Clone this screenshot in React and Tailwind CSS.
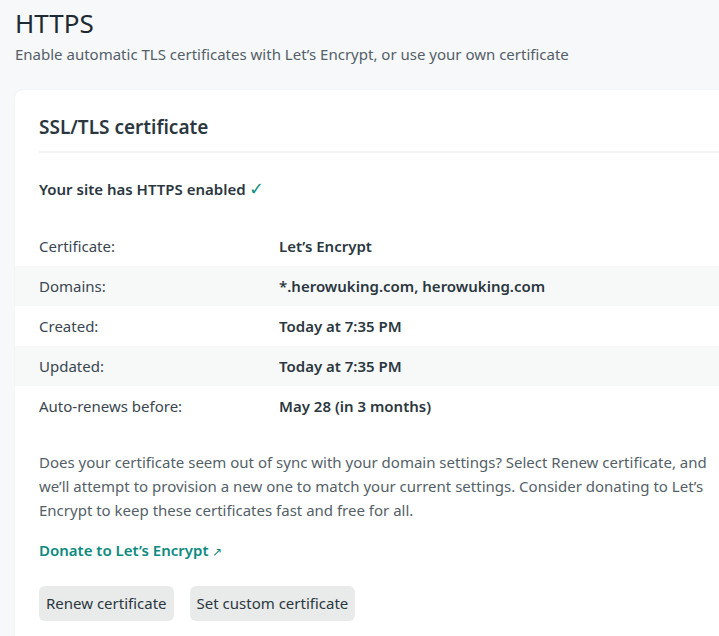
import React from 'react';

const rows = [
  { label: 'Certificate:', value: 'Let\u2019s Encrypt' },
  { label: 'Domains:', value: '*.herowuking.com, herowuking.com', striped: true },
  { label: 'Created:', value: 'Today at 7:35 PM' },
  { label: 'Updated:', value: 'Today at 7:35 PM', striped: true },
  { label: 'Auto-renews before:', value: 'May 28 (in 3 months)' },
];

export default function App() {
  return (
    <div
      className="min-h-screen bg-[#f6f8f9] text-[#2e3a44] overflow-hidden"
      style={{ fontFamily: '"Segoe UI", "Noto Sans", sans-serif' }}
    >
      <div className="pl-[15px] pt-[6px]">
        <h1 className="text-[26px] leading-[34px] font-normal text-[#1e2a33]">HTTPS</h1>
        <p className="mt-[3px] text-[15px] leading-[22px] text-[#545f68]">
          Enable automatic TLS certificates with Let’s Encrypt, or use your own certificate
        </p>

        <div className="mt-[25px] w-[740px] bg-white rounded-l-lg shadow-[0_0_2px_rgba(0,0,0,0.06)] pb-6">
          <div className="ml-6 border-b-2 border-[#f2f4f5] pt-[24px] pb-[11px]">
            <h2 className="text-[19px] leading-[26px] font-semibold text-[#2b3740]">SSL/TLS certificate</h2>
          </div>

          <p className="px-6 mt-[24px] text-[15px] leading-[24px] font-semibold text-[#2b3740]">
            Your site has HTTPS enabled <span className="text-[#14907f] font-normal text-[18px] leading-none">✓</span>
          </p>

          <div className="mt-[25px]">
            {rows.map((r) => (
              <div
                key={r.label}
                className={`flex items-center h-10 px-6 text-[15px] ${r.striped ? 'bg-[#f7f9f9]' : ''}`}
              >
                <div className="w-[240px] text-[#3a4650]">{r.label}</div>
                <div className="font-semibold text-[#2b3740]">{r.value}</div>
              </div>
            ))}
          </div>

          <p className="px-6 mt-[24px] w-[730px] text-[15px] leading-[24px] text-[#545f68]">
            Does your certificate seem out of sync with your domain settings? Select Renew certificate, and we’ll attempt to provision a new one to match your current settings. Consider donating to Let’s Encrypt to keep these certificates fast and free for all.
          </p>

          <a className="block px-6 mt-[16px] text-[15px] leading-[24px] font-semibold text-[#0d8a80]">
            Donate to Let’s Encrypt <span className="font-normal text-[12px]">↗</span>
          </a>

          <div className="flex gap-[16px] px-6 mt-[22px]">
            <button className="h-[35px] px-[7px] rounded-md bg-[#e9ebeb] text-[15px] text-[#2b3740]">Renew certificate</button>
            <button className="h-[35px] px-[7px] rounded-md bg-[#e9ebeb] text-[15px] text-[#2b3740]">Set custom certificate</button>
          </div>
        </div>
      </div>
    </div>
  );
}
